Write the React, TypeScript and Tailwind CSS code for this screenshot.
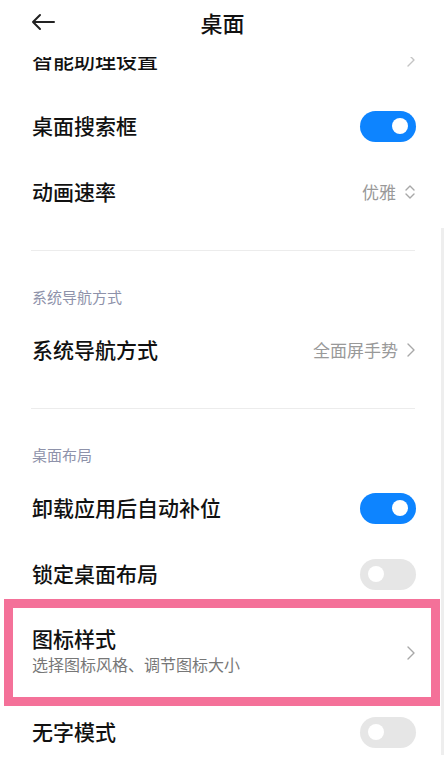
const font = { fontFamily: '"Noto Sans CJK SC", "Noto Sans", sans-serif' };

const Toggle = ({ on }: { on: boolean }) => (
  <div
    className={`flex h-[31px] w-[56px] items-center rounded-full px-[8px] ${
      on ? "justify-end bg-[#0d84ff]" : "justify-start bg-[#e6e6e6]"
    }`}
  >
    <div className="h-[16px] w-[16px] rounded-full bg-white" />
  </div>
);

const ChevronRight = ({ light }: { light?: boolean }) => (
  <svg width="10" height="16" viewBox="0 0 10 16" className="ml-[8px]">
    <path
      d="M2 2 L8 8 L2 14"
      fill="none"
      stroke={light ? "#c4c4c4" : "#a8a8a8"}
      strokeWidth="1.4"
      strokeLinecap="round"
      strokeLinejoin="round"
    />
  </svg>
);

const ChevronUpDown = () => (
  <svg width="12" height="18" viewBox="0 0 12 18" className="ml-[8px]">
    <path
      d="M2 7 L6 3 L10 7 M2 11 L6 15 L10 11"
      fill="none"
      stroke="#a8a8a8"
      strokeWidth="1.4"
      strokeLinecap="round"
      strokeLinejoin="round"
    />
  </svg>
);

type RowProps = {
  title: string;
  right?: React.ReactNode;
  h?: string;
};

const Row = ({ title, right, h = "h-[66px]" }: RowProps) => (
  <div className={`flex ${h} items-center justify-between pl-[32px] pr-[29px]`}>
    <span className="text-[21px] font-medium text-[#111]">{title}</span>
    {right}
  </div>
);

const Value = ({ text, updown }: { text: string; updown?: boolean }) => (
  <div className="flex items-center">
    <span className="text-[17px] text-[#999]">{text}</span>
    {updown ? <ChevronUpDown /> : <ChevronRight />}
  </div>
);

const SectionHeader = ({ text }: { text: string }) => (
  <div className="pl-[32px] pt-[36px] pb-[10px] text-[15px] leading-[20px] text-[#8e92aa]">
    {text}
  </div>
);

const Divider = () => (
  <div className="mt-[25px] ml-[31px] mr-[30px] h-px bg-[#ececec]" />
);

const App = () => {
  return (
    <div className="relative h-[773px] w-[445px] overflow-hidden bg-white" style={font}>
      {/* header */}
      <div className="relative z-10 flex h-[57px] items-start bg-white">
        <svg width="26" height="20" viewBox="0 0 26 20" className="absolute left-[30px] top-[12px]">
          <path
            d="M24 10 H3 M10 3 L3 10 L10 17"
            fill="none"
            stroke="#222"
            strokeWidth="2"
            strokeLinecap="round"
            strokeLinejoin="round"
          />
        </svg>
        <div className="w-full pt-[6px] text-center text-[22px] font-medium leading-[32px] text-[#111]">桌面</div>
      </div>

      {/* list */}
      <div className="-mt-[30px]">
        <Row title="智能助理设置" right={<ChevronRight light />} />
        <Row title="桌面搜索框" right={<Toggle on />} />
        <Row title="动画速率" right={<Value text="优雅" updown />} />
        <Divider />

        <SectionHeader text="系统导航方式" />
        <Row title="系统导航方式" right={<Value text="全面屏手势" />} />
        <Divider />

        <SectionHeader text="桌面布局" />
        <Row title="卸载应用后自动补位" right={<Toggle on />} />
        <Row title="锁定桌面布局" right={<Toggle on={false} />} />

        <div className="relative flex h-[92px] items-center justify-between pl-[32px] pr-[29px]">
          <div className="flex flex-col pb-[6px]">
            <span className="text-[21px] font-medium leading-[28px] text-[#111]">图标样式</span>
            <span className="text-[16px] leading-[24px] text-[#777]">选择图标风格、调节图标大小</span>
          </div>
          <ChevronRight />
          <div className="pointer-events-none absolute -top-[8px] -bottom-[7px] left-[4px] right-[5px] border-[9px] border-[#f47199]" />
        </div>

        <Row title="无字模式" right={<Toggle on={false} />} />
      </div>

      {/* scrollbar */}
      <div className="absolute right-[1px] top-[228px] h-[527px] w-[3px] bg-[#eeeeee]" />
    </div>
  );
};

export default App;
